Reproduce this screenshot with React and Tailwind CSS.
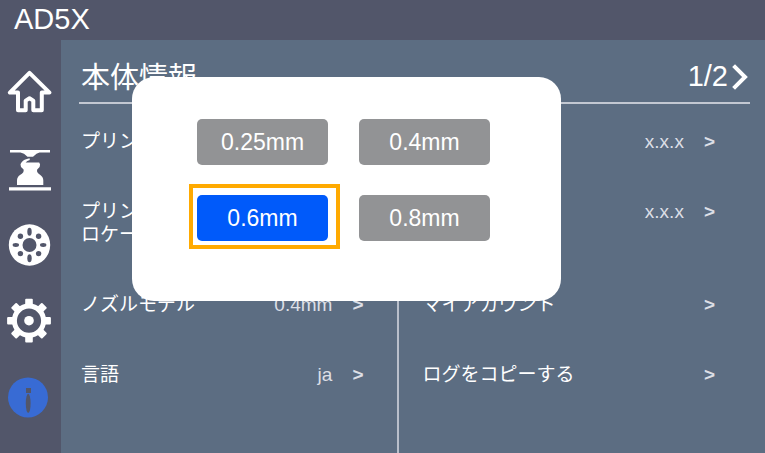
import React, { useState } from 'react';

const NOZZLE_SIZES = ['0.25mm', '0.4mm', '0.6mm', '0.8mm'];

function HomeIcon() {
  return (
    <svg viewBox="0 0 48 48" className="w-12 h-12" fill="none" stroke="currentColor" strokeWidth="4" strokeLinejoin="round">
      <path d="M20.7 42.3V32.6L24.5 30.3L28.3 32.6V42.3H36.8V24.6H44.5L24.5 4.8L4.8 24.6H13V42.3Z" />
    </svg>
  );
}

function PrintIcon() {
  return (
    <svg viewBox="0 0 48 48" className="w-12 h-12" fill="currentColor">
      <path d="M5 6H45V8.4H34.5L31.5 9.8L28 12.8H22.5L19 9.8L15.5 8.4H5Z" />
      <path d="M24.6 14.2C19.5 15 16.2 17.5 15.5 20.5L16 23L18.6 25.4Q19.4 28.4 15 31Q12 33 12 36.5V41H38.3V36.5Q38.3 33 35 30.8Q31.2 28.4 32.2 25.6L34.6 23Q35.8 20 34.2 18.4H20.6Q22 16.6 24.8 16Z" />
      <path d="M4 43.3H46V46.4H4Z" />
    </svg>
  );
}

function SpoolIcon() {
  return (
    <svg viewBox="0 0 48 48" className="w-12 h-12">
      <circle cx="24.5" cy="25" r="20.7" fill="currentColor" />
      <g fill="#52566a">
        <circle cx="24.5" cy="25" r="7" />
        <ellipse cx="24.5" cy="11.8" rx="2.2" ry="4" />
        <ellipse cx="24.5" cy="38.2" rx="2.2" ry="4" />
        <ellipse cx="10.8" cy="25" rx="3.2" ry="1.9" />
        <ellipse cx="38.2" cy="25" rx="3.2" ry="1.9" />
        <circle cx="15.4" cy="16.3" r="2.7" />
        <circle cx="33.6" cy="16.3" r="2.7" />
        <circle cx="15.4" cy="33.6" r="2.7" />
        <circle cx="33.6" cy="33.6" r="2.7" />
      </g>
    </svg>
  );
}

function GearIcon() {
  return (
    <svg viewBox="0 0 48 48" className="w-12 h-12" fill="currentColor">
      {[0, 45, 90, 135].map((angle) => (
        <g key={angle} transform={`rotate(${angle} 24 24.7)`}>
          <rect x="20.2" y="2.8" width="7.6" height="8" rx="1" />
          <rect x="20.2" y="38.6" width="7.6" height="8" rx="1" />
        </g>
      ))}
      <circle cx="24" cy="24.7" r="14.6" fill="none" stroke="currentColor" strokeWidth="5" />
      <circle cx="24" cy="24.7" r="4.8" />
    </svg>
  );
}

function InfoIcon() {
  return (
    <svg viewBox="0 0 48 48" className="w-12 h-12">
      <circle cx="23" cy="25.4" r="20" fill="#386bd4" />
      <rect x="21" y="16" width="5" height="5" fill="#52566a" />
      <ellipse cx="23.2" cy="31.4" rx="2.4" ry="9.6" fill="#52566a" />
    </svg>
  );
}

const NAV_ITEMS = [
  { name: 'ホーム', Icon: HomeIcon },
  { name: '印刷', Icon: PrintIcon },
  { name: 'フィラメント', Icon: SpoolIcon },
  { name: '設定', Icon: GearIcon },
  { name: '情報', Icon: InfoIcon },
];

function Sidebar() {
  return (
    <nav className="w-[61px] shrink-0 bg-[#52566a] pt-7 pr-[3px] flex flex-col items-center gap-7">
      {NAV_ITEMS.map(({ name, Icon }) => (
        <button key={name} type="button" aria-label={name} className="text-white">
          <Icon />
        </button>
      ))}
    </nav>
  );
}

function InfoRow({ label, value }) {
  return (
    <button type="button" className="w-full flex items-start justify-between text-left text-[19px] leading-[23px]">
      <span className="whitespace-pre-line">{label}</span>
      <span className="flex gap-5 text-[#dcdfe6]">
        <span>{value}</span>
        <span className="font-bold">&gt;</span>
      </span>
    </button>
  );
}

function NozzleDialog() {
  const [selected, setSelected] = useState('0.6mm');

  return (
    <div
      role="dialog"
      aria-label="ノズルモデル"
      className="absolute left-[132px] top-[77px] bg-white rounded-[22px] pt-[42px] pb-[60px] pl-[65px] pr-[71px]"
    >
      <div className="grid grid-cols-2 gap-x-[31px] gap-y-[30px]">
        {NOZZLE_SIZES.map((size) => (
          <button
            key={size}
            type="button"
            aria-pressed={size === selected}
            onClick={() => setSelected(size)}
            className={`relative w-[131px] h-[46px] rounded-[5px] text-[23px] text-white ${
              size === selected ? 'bg-[#005afa]' : 'bg-[#929395]'
            }`}
          >
            {size}
            {size === selected && (
              <span className="absolute -left-2 -right-3 -top-[11px] -bottom-2 border-4 border-[#ffaa00]" />
            )}
          </button>
        ))}
      </div>
    </div>
  );
}

export default function App() {
  return (
    <div className="relative min-h-screen flex flex-col overflow-hidden bg-[#5c6d82] text-white font-['Liberation_Sans','Noto_Sans_CJK_JP',sans-serif]">
      <header className="h-10 shrink-0 bg-[#52566a] px-3.5 flex items-center text-[29px]">AD5X</header>

      <div className="flex-1 flex">
        <Sidebar />

        <main className="flex-1 pl-[18px] pr-[15px] flex flex-col">
          <div className="h-16 pt-3 pl-0.5 pr-0.5 border-b-2 border-[#c3c8d2] flex items-center justify-between text-[29px]">
            <h1 className="pt-1">本体情報</h1>
            <button type="button" aria-label="次のページ" className="flex items-center gap-1">
              <span>1/2</span>
              <svg viewBox="0 0 16 26" className="w-4 h-[26px]" fill="none" stroke="currentColor" strokeWidth="4">
                <path d="M1.6 1.6L13 13L1.6 24.4" />
              </svg>
            </button>
          </div>

          <div className="flex-1 grid grid-cols-[10fr_11fr]">
            <section className="border-r-2 border-[#b9bfcb] pt-[26px] pl-0.5 pr-[33px] flex flex-col gap-[47px]">
              <InfoRow label="プリンター名" />
              <InfoRow label={'プリンター\nロケーション'} />
              <InfoRow label="ノズルモデル" value="0.4mm" />
              <InfoRow label="言語" value="ja" />
            </section>
            <section className="pt-[26px] pl-6 pr-[35px] flex flex-col gap-[47px]">
              <InfoRow value="x.x.x" />
              {/* keeps the height of the two-line row on the left */}
              <div className="h-[46px]">
                <InfoRow value="x.x.x" />
              </div>
              <InfoRow label="マイアカウント" />
              <InfoRow label="ログをコピーする" />
            </section>
          </div>
        </main>
      </div>

      <NozzleDialog />
    </div>
  );
}
